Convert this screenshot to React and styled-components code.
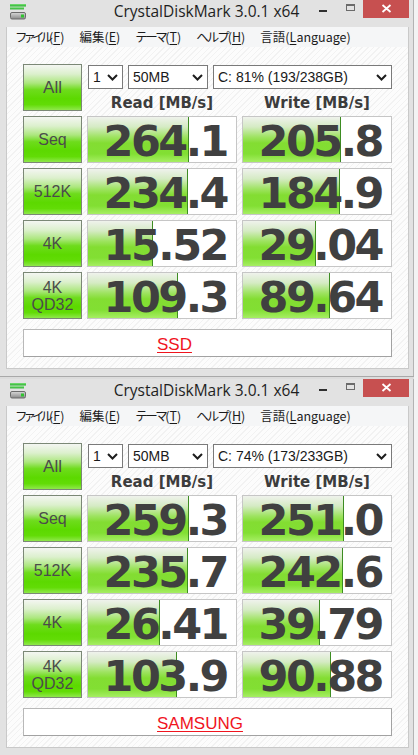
import React from "react";
import styled, { createGlobalStyle } from "styled-components";

const GlobalStyle = createGlobalStyle`
  html, body { margin: 0; padding: 0; }
  body {
    background: #f3f3f3;
    width: 418px;
    height: 755px;
    overflow: hidden;
    font-family: "Liberation Sans", Arial, sans-serif;
  }
`;

const Screen = styled.div`
  width: 418px;
  height: 755px;
  display: flex;
  flex-direction: column;
`;

const WindowFrame = styled.section`
  box-sizing: border-box;
  width: 414px;
  height: 376px;
  flex: none;
  background: #e2e2e2;
  border-right: 1px solid #b3b3b3;
  display: flex;
  flex-direction: column;
`;

const Separator = styled.div`
  box-sizing: border-box;
  width: 414px;
  height: 3px;
  flex: none;
  border-top: 1px solid #a9a9a9;
  background: #dcdcdc;
`;

const TitleBar = styled.header`
  height: 27px;
  flex: none;
  display: grid;
  grid-template-columns: 1fr auto 1fr;
  align-items: start;
`;

const AppIcon = styled.svg`
  display: block;
  margin: 4px 0 0 10px;
`;

const TitleText = styled.h1`
  margin: 0;
  font: 400 15.5px/23px "Open Sans", "Liberation Sans", sans-serif;
  color: #1e1e1e;
  white-space: nowrap;
`;

const Controls = styled.div`
  justify-self: end;
  display: flex;
  margin-right: 4px;
`;

const CaptionButton = styled.div`
  width: ${(p) => (p.$close ? 46 : 27)}px;
  height: 18px;
  background: ${(p) => (p.$close ? "#c75050" : "transparent")};
  svg { display: block; }
`;

const Inner = styled.div`
  box-sizing: border-box;
  flex: 1;
  margin: 0 4px 7px 6px;
  border: 1px solid #c9c9c9;
  border-top: none;
  display: flex;
  flex-direction: column;
`;

const MenuBar = styled.nav`
  height: 20px;
  flex: none;
  background: #f5f6f7;
  display: flex;
  align-items: center;
  gap: 15px;
  padding-left: 8px;
  font-family: "Noto Sans CJK JP", sans-serif;
  font-size: 12.5px;
  line-height: 20px;
  color: #1b1b1b;
  white-space: nowrap;
`;

const MenuItem = styled.span`
  u { text-decoration-thickness: 1px; text-underline-offset: 2px; }
`;

const Kana = styled.span`
  letter-spacing: ${(p) => p.$tight}px;
`;

const Client = styled.div`
  flex: 1;
  box-sizing: border-box;
  background: repeating-linear-gradient(135deg, #fcfcfc 0 3px, #f2f2f2 3px 4px);
  padding: 17px 15px 0 16px;
  display: grid;
  grid-template-columns: 59px 150px 150px;
  grid-template-rows: 47px repeat(4, 47px) 28px;
  column-gap: 5px;
  row-gap: 5px;
  align-content: start;
`;

const TestButton = styled.div`
  box-sizing: border-box;
  border: 1px solid #7b8876;
  display: flex;
  align-items: center;
  justify-content: center;
  text-align: center;
  white-space: pre-line;
  background: linear-gradient(
    to bottom,
    #f4f6f2 0%,
    #dcf0cd 20%,
    #ace77e 40%,
    #6edc1c 55%,
    #5cd900 75%,
    #62dc06 88%,
    #8fe84b 100%
  );
  font: ${(p) => p.$size}px/17px "Liberation Sans", Arial, sans-serif;
  color: #4b4b4b;
`;

const TopRight = styled.div`
  grid-column: 2 / 4;
  display: flex;
  flex-direction: column;
`;

const SelectRow = styled.div`
  display: flex;
  gap: 5px;
  margin: 1px 0 0 1px;
`;

const Select = styled.div`
  box-sizing: border-box;
  width: ${(p) => p.$w}px;
  height: 24px;
  border: 1px solid #7a7a7a;
  background: #fff;
  display: flex;
  align-items: center;
  justify-content: space-between;
  padding: 0 4px 0 4px;
  font: 14px "Liberation Sans", Arial, sans-serif;
  color: #1a1a1a;
  white-space: nowrap;
  svg { display: block; flex: none; }
`;

const HeaderRow = styled.div`
  display: grid;
  grid-template-columns: 150px 150px;
  column-gap: 5px;
  padding-top: 6px;
`;

const Header = styled.div`
  text-align: center;
  font: 700 15px/16px "DejaVu Sans", sans-serif;
  color: #3c3c3c;
  white-space: nowrap;
`;

const ResultCell = styled.div`
  position: relative;
  box-sizing: border-box;
  border: 1px solid #c6c6c6;
  background: #fff;
  display: flex;
  align-items: center;
  justify-content: flex-end;
  padding: 4px 9px 0 0;
`;

const Meter = styled.div`
  position: absolute;
  left: 0;
  top: 0;
  bottom: 0;
  box-sizing: border-box;
  border-right: 1px solid #3d8c22;
  background: linear-gradient(
    to bottom,
    #eff2ec 0%,
    #d5ebc4 22%,
    #9de35f 45%,
    #83dd32 58%,
    #82df33 82%,
    #a6ee63 100%
  );
`;

const Value = styled.span`
  position: relative;
  font: 700 43px/37px "DejaVu Sans", sans-serif;
  letter-spacing: -2.5px;
  color: #404040;
  white-space: nowrap;
`;

const Comment = styled.div`
  grid-column: 1 / -1;
  margin-top: 5px;
  box-sizing: border-box;
  height: 28px;
  background: #fff;
  border: 1px solid #b8b8b8;
  border-right-color: #a2a2a2;
  border-bottom-color: #a2a2a2;
  padding: 5px 0 0 133px;
  font: 17px/20px "Liberation Sans", Arial, sans-serif;
  color: #f0141e;
  text-decoration: underline;
  text-decoration-thickness: 1px;
  text-underline-offset: 2px;
`;

const Chevron = () => (
  <svg width="11" height="7" viewBox="0 0 11 7">
    <polyline points="1,1 5.5,5.5 10,1" fill="none" stroke="#1d1d1d" strokeWidth="2" />
  </svg>
);

const DriveIcon = () => (
  <AppIcon width="16" height="16" viewBox="0 0 16 16">
    <defs>
      <linearGradient id="gbar" x1="0" y1="0" x2="0" y2="1">
        <stop offset="0" stopColor="#7ee07a" />
        <stop offset="1" stopColor="#1fae24" />
      </linearGradient>
      <linearGradient id="gdrv" x1="0" y1="0" x2="0" y2="1">
        <stop offset="0" stopColor="#d8d8d8" />
        <stop offset="1" stopColor="#8a8a8a" />
      </linearGradient>
    </defs>
    <rect x="0" y="0" width="16" height="2.5" fill="url(#gbar)" />
    <rect x="0" y="3.2" width="14" height="2.2" fill="url(#gbar)" />
    <rect x="0.5" y="8.5" width="15" height="6.5" rx="1.5" fill="url(#gdrv)" stroke="#6c6c6c" />
    <rect x="11" y="10.5" width="3" height="3" fill="#2ec42e" />
  </AppIcon>
);

const WindowControls = () => (
  <Controls>
    <CaptionButton>
      <svg width="27" height="18" viewBox="0 0 27 18">
        <rect x="10" y="10" width="8" height="2" fill="#2f2f2f" />
      </svg>
    </CaptionButton>
    <CaptionButton>
      <svg width="27" height="18" viewBox="0 0 27 18">
        <rect x="10.5" y="4.5" width="8" height="6" fill="none" stroke="#6a6a6a" />
        <rect x="10" y="4" width="9" height="2" fill="#6a6a6a" />
      </svg>
    </CaptionButton>
    <CaptionButton $close>
      <svg width="46" height="18" viewBox="0 0 46 18">
        <path d="M19.5 5 L27.5 12 M27.5 5 L19.5 12" stroke="#fff" strokeWidth="1.8" />
      </svg>
    </CaptionButton>
  </Controls>
);

const menus = [
  { name: "ファイル", tight: -4, key: "F", rest: ")" },
  { name: "編集", tight: 0, key: "E", rest: ")" },
  { name: "テーマ", tight: -2.5, key: "T", rest: ")" },
  { name: "ヘルプ", tight: -2, key: "H", rest: ")" },
  { name: "言語", tight: 0, key: "L", rest: "anguage)" },
];

const tests = [
  { label: "Seq", size: 16 },
  { label: "512K", size: 16 },
  { label: "4K", size: 16 },
  { label: "4K\nQD32", size: 16 },
];

const benches = [
  {
    drive: "C: 81% (193/238GB)",
    comment: "SSD",
    rows: [
      ["264.1", "205.8"],
      ["234.4", "184.9"],
      ["15.52", "29.04"],
      ["109.3", "89.64"],
    ],
  },
  {
    drive: "C: 74% (173/233GB)",
    comment: "SAMSUNG",
    rows: [
      ["259.3", "251.0"],
      ["235.7", "242.6"],
      ["26.41", "39.79"],
      ["103.9", "90.88"],
    ],
  },
];

const meterWidth = (v) => {
  const n = parseFloat(v);
  const f = Math.max(0, Math.min(1, (Math.log10(n) + 1) / 5));
  return Math.round(148 * f);
};

const Result = ({ value }) => (
  <ResultCell>
    <Meter style={{ width: meterWidth(value) }} />
    <Value>{value}</Value>
  </ResultCell>
);

const DiskMarkWindow = ({ data }) => (
  <WindowFrame>
    <TitleBar>
      <DriveIcon />
      <TitleText>CrystalDiskMark 3.0.1 x64</TitleText>
      <WindowControls />
    </TitleBar>
    <Inner>
      <MenuBar>
        {menus.map((m) => (
          <MenuItem key={m.key}>
            <Kana $tight={m.tight}>{m.name}</Kana>(
            <u>{m.key}</u>
            {m.rest}
          </MenuItem>
        ))}
      </MenuBar>
      <Client>
        <TestButton $size={17}>All</TestButton>
        <TopRight>
          <SelectRow>
            <Select $w={35}>
              <span>1</span>
              <Chevron />
            </Select>
            <Select $w={80}>
              <span>50MB</span>
              <Chevron />
            </Select>
            <Select $w={179}>
              <span>{data.drive}</span>
              <Chevron />
            </Select>
          </SelectRow>
          <HeaderRow>
            <Header>Read [MB/s]</Header>
            <Header>Write [MB/s]</Header>
          </HeaderRow>
        </TopRight>
        {tests.map((t, i) => (
          <React.Fragment key={t.label}>
            <TestButton $size={t.size}>{t.label}</TestButton>
            <Result value={data.rows[i][0]} />
            <Result value={data.rows[i][1]} />
          </React.Fragment>
        ))}
        <Comment>{data.comment}</Comment>
      </Client>
    </Inner>
  </WindowFrame>
);

export default function App() {
  return (
    <>
      <GlobalStyle />
      <Screen>
        <DiskMarkWindow data={benches[0]} />
        <Separator />
        <DiskMarkWindow data={benches[1]} />
      </Screen>
    </>
  );
}
